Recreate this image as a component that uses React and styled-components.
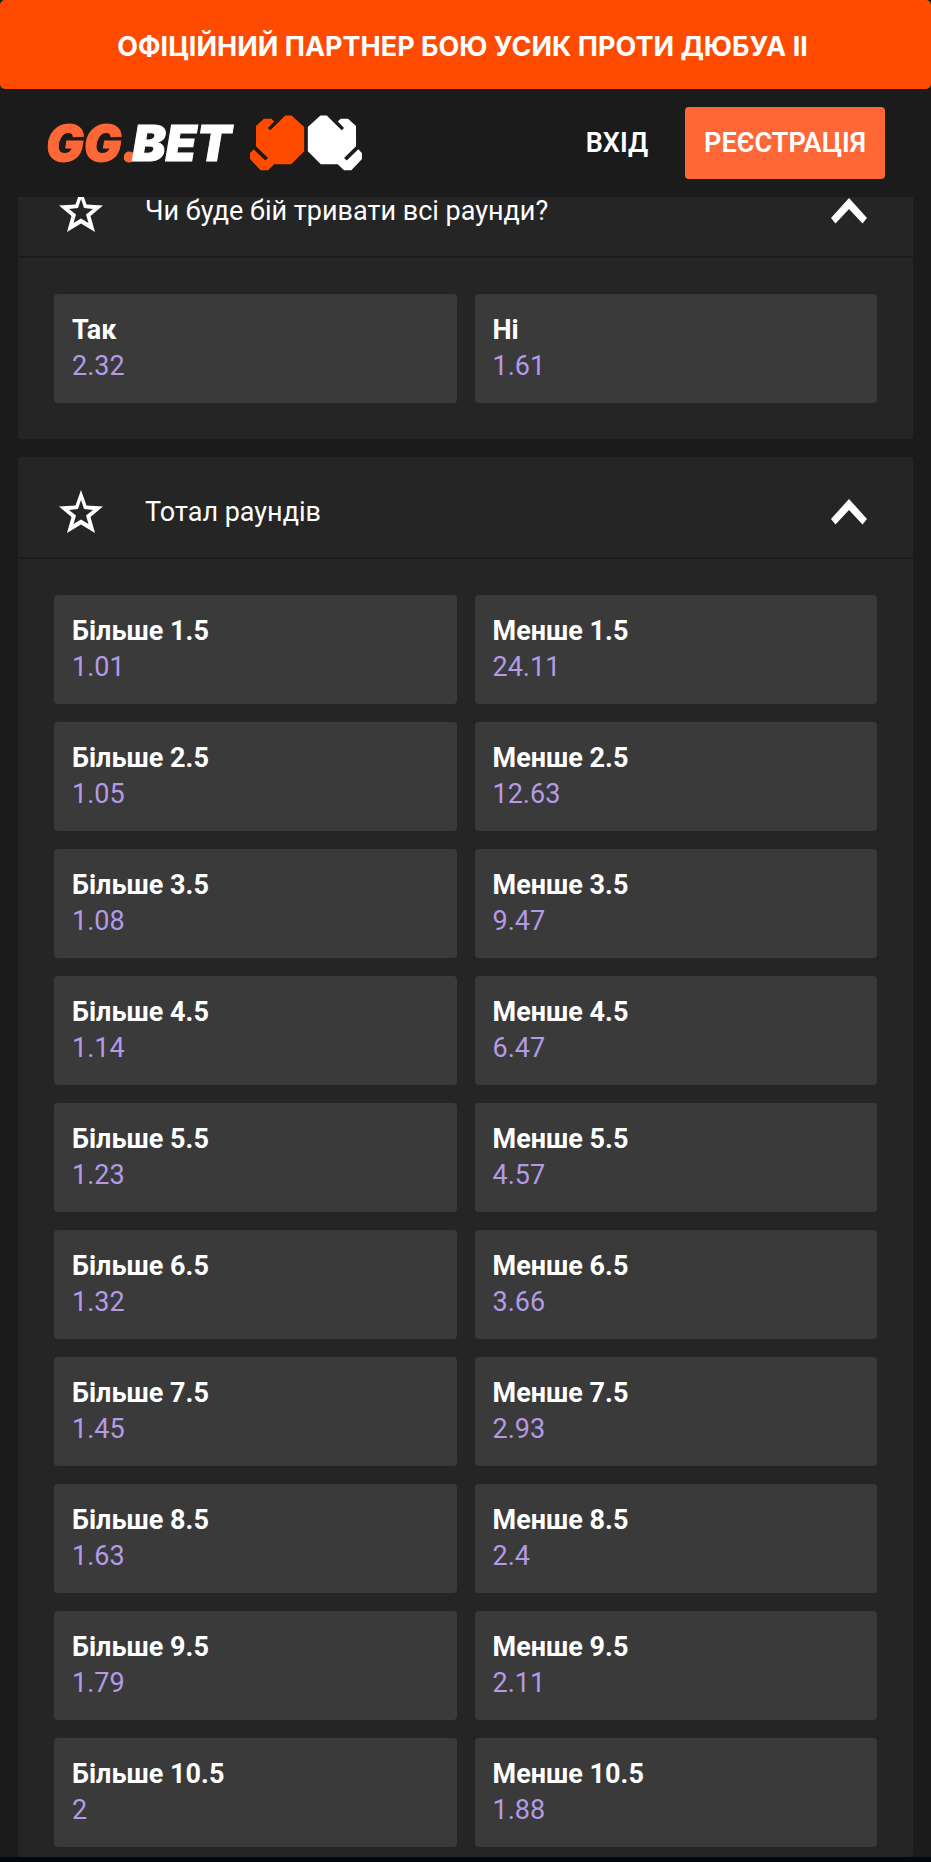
import { useState } from 'react';
import styled, { createGlobalStyle } from 'styled-components';

const GlobalStyle = createGlobalStyle`
  *, *::before, *::after {
    box-sizing: border-box;
  }
  body {
    margin: 0;
    background: #02080d;
    color: #fff;
    font-family: Roboto, 'Noto Sans', sans-serif;
    font-size: 27px;
    line-height: 36px;
  }
  button {
    font: inherit;
    color: inherit;
    border: 0;
    cursor: pointer;
  }
`;

const Page = styled.div`
  background: #1b1b1b;
`;

const Banner = styled.a`
  display: flex;
  align-items: center;
  justify-content: center;
  height: 89px;
  padding: 4px 6px 0 0;
  border-radius: 5px;
  background: #ff4b00;
  color: #fff;
  font-family: Inter, Roboto, sans-serif;
  font-size: 27px;
  font-weight: 700;
  text-decoration: none;
  text-transform: uppercase;
`;

const TopBar = styled.header`
  display: flex;
  align-items: center;
  justify-content: space-between;
  height: 108px;
  padding: 0 46px;
`;

const Brand = styled.a`
  display: flex;
  align-items: center;
  gap: 19px;
  color: #fff;
  text-decoration: none;
`;

const Wordmark = styled.span`
  font-family: Inter, Roboto, sans-serif;
  font-size: 50px;
  font-style: italic;
  font-weight: 900;
  line-height: 50px;
  -webkit-text-stroke: 1px currentColor;

  b {
    margin-right: -8px;
    font-weight: 900;
    color: #ff6836;
  }
`;

const Actions = styled.div`
  display: flex;
  align-items: center;
  gap: 18px;
`;

const ActionButton = styled.button`
  height: 72px;
  padding: 0 19px;
  border-radius: 4px;
  background: ${props => (props.$primary ? '#ff6836' : 'transparent')};
  font-weight: 600;
`;

// the first market sits partly scrolled under the top bar
const Markets = styled.main`
  overflow: hidden;
  padding: 0 18px;
`;

const MarketList = styled.div`
  display: grid;
  gap: 18px;
  margin-top: -41px;
`;

const Market = styled.section`
  border-radius: 3px;
  background: #252525;
`;

const MarketHead = styled.div`
  display: grid;
  grid-template-columns: 44px 1fr auto;
  align-items: center;
  column-gap: 42px;
  height: 102px;
  padding: 10px 46px 0 41px;
  border-bottom: 2px solid #1c1c1c;
`;

const MarketTitle = styled.h2`
  margin: 0;
  font-size: 27px;
  font-weight: 400;
  line-height: 28px;
`;

const IconButton = styled.button`
  display: flex;
  padding: 0;
  background: none;
`;

const Odds = styled.div`
  display: grid;
  grid-template-columns: 1fr 1fr;
  gap: 18px;
  padding: 36px 36px ${props => (props.$last ? '10px' : '36px')};
`;

const Odd = styled.button`
  display: flex;
  flex-direction: column;
  height: 109px;
  padding: 18px;
  border-radius: 4px;
  background: #3a3a3a;
  text-align: left;
`;

const OddName = styled.span`
  font-weight: 700;
`;

const OddValue = styled.span`
  color: #b39ae6;
`;

const markets = [
  {
    title: 'Чи буде бій тривати всі раунди?',
    odds: [
      ['Так', '2.32'],
      ['Ні', '1.61'],
    ],
  },
  {
    title: 'Тотал раундів',
    odds: [
      ['Більше 1.5', '1.01'],
      ['Менше 1.5', '24.11'],
      ['Більше 2.5', '1.05'],
      ['Менше 2.5', '12.63'],
      ['Більше 3.5', '1.08'],
      ['Менше 3.5', '9.47'],
      ['Більше 4.5', '1.14'],
      ['Менше 4.5', '6.47'],
      ['Більше 5.5', '1.23'],
      ['Менше 5.5', '4.57'],
      ['Більше 6.5', '1.32'],
      ['Менше 6.5', '3.66'],
      ['Більше 7.5', '1.45'],
      ['Менше 7.5', '2.93'],
      ['Більше 8.5', '1.63'],
      ['Менше 8.5', '2.4'],
      ['Більше 9.5', '1.79'],
      ['Менше 9.5', '2.11'],
      ['Більше 10.5', '2'],
      ['Менше 10.5', '1.88'],
    ],
  },
];

const glove =
  'M678 92 V79 L702 57 H724 L733 65 L714 85 L721 92 L751 62 L766 47 H785 L823 82 V155 L784 194 H733 L714 212 H692 L660 178 V161 L671 149 L706 183 L714 175 L678 140 Z';

const Gloves = () => (
  <svg width="112" height="56" viewBox="660 46 337 168" aria-hidden="true">
    <path fill="#ff4b00" d={glove} />
    <path fill="#fff" d={glove} transform="translate(1657 0) scale(-1 1)" />
  </svg>
);

const Star = () => (
  <svg width="44" height="44" viewBox="0 0 44 44" aria-hidden="true">
    <path
      fill="#fff"
      fillRule="evenodd"
      d="M22 0 L27.5 15.5 L44 16.5 L31.5 27 L36 43 L22 34.5 L8 43 L12.5 27 L0 16.5 L16.5 15.5 Z M22 10 L19 19 L10 20 L17 25.5 L14.5 34 L22 29.5 L29.5 34 L27 25.5 L34 20 L25 19 Z"
    />
  </svg>
);

const Chevron = () => (
  <svg width="36" height="26" viewBox="0 0 36 26" aria-hidden="true">
    <path fill="#fff" d="M18 0 L36 20 L31.5 25.5 L18 11 L4.5 25.5 L0 20 Z" />
  </svg>
);

const MarketCard = ({ title, odds, last }) => {
  const [open, setOpen] = useState(true);

  return (
    <Market>
      <MarketHead>
        <IconButton type="button" aria-label="Додати в обране">
          <Star />
        </IconButton>
        <MarketTitle>{title}</MarketTitle>
        <IconButton
          type="button"
          aria-label="Згорнути"
          aria-expanded={open}
          onClick={() => setOpen(!open)}
        >
          <Chevron />
        </IconButton>
      </MarketHead>
      {open && (
        <Odds $last={last}>
          {odds.map(([name, value]) => (
            <Odd key={name} type="button">
              <OddName>{name}</OddName>
              <OddValue>{value}</OddValue>
            </Odd>
          ))}
        </Odds>
      )}
    </Market>
  );
};

const App = () => (
  <>
    <GlobalStyle />
    <Page>
      <Banner href="#">Офіційний партнер бою Усик проти Дюбуа II</Banner>
      <TopBar>
        <Brand href="#">
          <Wordmark>
            <b>GG.</b>BET
          </Wordmark>
          <Gloves />
        </Brand>
        <Actions>
          <ActionButton type="button">ВХІД</ActionButton>
          <ActionButton type="button" $primary>
            РЕЄСТРАЦІЯ
          </ActionButton>
        </Actions>
      </TopBar>
      <Markets>
        <MarketList>
          {markets.map((market, i) => (
            <MarketCard
              key={market.title}
              {...market}
              last={i === markets.length - 1}
            />
          ))}
        </MarketList>
      </Markets>
    </Page>
  </>
);

export default App;
